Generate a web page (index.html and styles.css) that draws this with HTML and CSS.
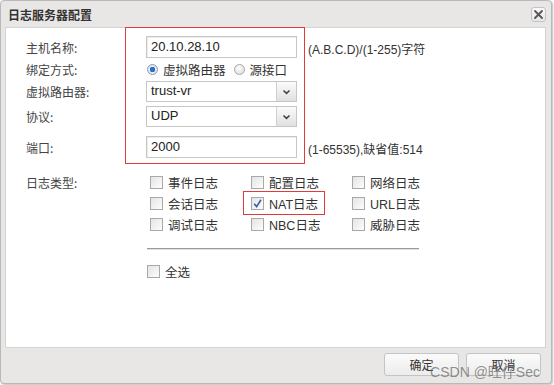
FILE: index.html
```html
<!DOCTYPE html>
<html lang="zh">
<head>
<meta charset="utf-8">
<link rel="stylesheet" href="styles.css">
</head>
<body>
<div class="dialog">
  <div class="titlebar">
    <span class="title">日志服务器配置</span>
    <span class="close">
      <svg width="11" height="11" viewBox="0 0 11 11"><path d="M2 2 L9 9 M9 2 L2 9" stroke="#555" stroke-width="1.8" stroke-linecap="round"/></svg>
    </span>
  </div>
  <div class="panel">
    <div class="row r1">
      <div class="label">主机名称:</div>
      <div class="input">20.10.28.10</div>
      <div class="hint">(A.B.C.D)/(1-255)字符</div>
    </div>
    <div class="row r2">
      <div class="label">绑定方式:</div>
      <div class="radios">
        <span class="radio on"></span><span class="rtext">虚拟路由器</span>
        <span class="radio"></span><span class="rtext">源接口</span>
      </div>
    </div>
    <div class="row r3">
      <div class="label">虚拟路由器:</div>
      <div class="select"><span class="val">trust-vr</span><span class="arrow"><svg width="9" height="6" viewBox="0 0 9 6"><path d="M1.5 1.5 L4.5 4.3 L7.5 1.5" fill="none" stroke="#444" stroke-width="1.6"/></svg></span></div>
    </div>
    <div class="row r4">
      <div class="label">协议:</div>
      <div class="select"><span class="val">UDP</span><span class="arrow"><svg width="9" height="6" viewBox="0 0 9 6"><path d="M1.5 1.5 L4.5 4.3 L7.5 1.5" fill="none" stroke="#444" stroke-width="1.6"/></svg></span></div>
    </div>
    <div class="row r5">
      <div class="label">端口:</div>
      <div class="input">2000</div>
      <div class="hint">(1-65535),缺省值:514</div>
    </div>
    <div class="types">
      <div class="label">日志类型:</div>
      <div class="checks">
        <div class="grid">
          <label class="cb"><span class="box"></span>事件日志</label>
          <label class="cb"><span class="box"></span>配置日志</label>
          <label class="cb"><span class="box"></span>网络日志</label>
          <label class="cb"><span class="box"></span>会话日志</label>
          <label class="cb"><span class="box checked"><svg width="11" height="11" viewBox="0 0 11 11"><path d="M2.2 5.8 L4.6 8.6 L9 1.8" fill="none" stroke="#3a5fb0" stroke-width="1.6"/></svg></span>NAT日志</label>
          <label class="cb"><span class="box"></span>URL日志</label>
          <label class="cb"><span class="box"></span>调试日志</label>
          <label class="cb"><span class="box"></span>NBC日志</label>
          <label class="cb"><span class="box"></span>威胁日志</label>
        </div>
        <div class="sep"></div>
        <label class="cb all"><span class="box"></span>全选</label>
      </div>
    </div>
    <div class="mark mark-main"></div>
    <div class="mark mark-nat"></div>
  </div>
  <div class="footer">
    <button class="btn">确定</button>
    <button class="btn">取消</button>
    <span class="watermark">CSDN @旺仔Sec</span>
  </div>
</div>
</body>
</html>
```
FILE: styles.css
```css
* { box-sizing: border-box; }
html, body {
  margin: 0;
  padding: 0;
  background: #ffffff;
  width: 554px;
  height: 385px;
  overflow: hidden;
}
body {
  font-family: "Liberation Sans", "Noto Sans CJK SC", sans-serif;
  font-size: 12px;
  color: #333;
}
.dialog {
  width: 552px;
  height: 384px;
  background: #e9e7e6;
  border: 1px solid #b9b9b9;
  border-radius: 4px;
  box-shadow: 1px 1px 2px rgba(0,0,0,0.25);
  display: flex;
  flex-direction: column;
  position: relative;
}
.titlebar {
  height: 26px;
  display: flex;
  align-items: center;
  justify-content: space-between;
  padding: 0 5px 0 7px;
}
.title {
  font-family: "Noto Sans CJK SC", sans-serif;
  font-weight: bold;
  font-size: 12px;
  color: #333;
}
.close {
  width: 15px;
  height: 15px;
  border: 1px solid #c4c4c4;
  border-radius: 3px;
  background: linear-gradient(#fafafa, #e6e6e6);
  display: flex;
  align-items: center;
  justify-content: center;
  margin-top: 1px;
}
.panel {
  margin: 0 5px 0 4px;
  height: 321px;
  background: #fff;
  border: 1px solid #d4d4d4;
  position: relative;
  padding: 8px 0 0 20px;
}
.row {
  display: flex;
  align-items: center;
}
.label {
  width: 120px;
  flex: none;
  font-family: "Noto Sans CJK SC", sans-serif;
  font-size: 12px;
  color: #444;
}
.r1 { height: 22px; }
.r2 { height: 23px; }
.r3 { height: 21px; }
.r4 { height: 21px; margin-top: 4px; }
.r5 { height: 22px; margin-top: 9px; }
.input {
  width: 151px;
  height: 22px;
  border: 1px solid #c6c6c6;
  box-shadow: inset 1px 1px 1px #ececec;
  padding: 0 4px;
  line-height: 19px;
  font-size: 13px;
  color: #222;
}
.hint {
  margin-left: 11px;
  font-size: 12px;
  color: #333;
  padding-top: 2px;
}
.radios {
  display: flex;
  align-items: center;
  font-family: "Noto Sans CJK SC", sans-serif;
  font-size: 12.5px;
  color: #333;
}
.radio {
  width: 11px;
  height: 11px;
  border-radius: 50%;
  border: 1px solid #a8a8a8;
  background: radial-gradient(circle at 40% 35%, #ffffff, #d6d6d6);
  margin-right: 5px;
  margin-left: 1px;
}
.radio.on {
  background: radial-gradient(circle, #2f6fc4 0 2.6px, #e8eef7 3px, #cfd6df 100%);
  border-color: #8a9cb5;
}
.rtext { margin-right: 7px; }
.select {
  width: 151px;
  height: 21px;
  border: 1px solid #c6c6c6;
  display: flex;
  align-items: stretch;
}
.select .val {
  flex: 1;
  padding: 0 4px;
  font-size: 13px;
  line-height: 18px;
  color: #222;
}
.select .arrow {
  width: 20px;
  border-left: 1px solid #d0d0d0;
  background: linear-gradient(#fbfbfb, #e0e0e0);
  display: flex;
  align-items: center;
  justify-content: center;
}
.types {
  display: flex;
  margin-top: 14px;
}
.types .label { padding-top: 2px; }
.checks {
  display: flex;
  flex-direction: column;
  width: 272px;
  margin-left: 1px;
}
.grid {
  display: grid;
  grid-template-columns: 101px 101px 70px;
  grid-auto-rows: 21px;
  padding-left: 3px;
}
.cb {
  display: flex;
  align-items: center;
  font-family: "Liberation Sans", "Noto Sans CJK SC", sans-serif;
  font-size: 12.5px;
  color: #333;
  white-space: nowrap;
}
.box {
  width: 13px;
  height: 13px;
  border: 1px solid #a9a9a9;
  background: linear-gradient(135deg, #e4e4e4, #fdfdfd);
  margin-right: 5px;
  display: flex;
  align-items: center;
  justify-content: center;
  flex: none;
}
.sep {
  margin-top: 13px;
  height: 2px;
  background: #9a9a9a;
  border-bottom: 1px solid #e0e0e0;
}
.all {
  margin-top: 11px;
  height: 21px;
}
.mark {
  position: absolute;
  border: 1.5px solid #e23a3a;
}
.mark-main {
  left: 119px;
  top: -1px;
  width: 180px;
  height: 137px;
}
.mark-nat {
  left: 237px;
  top: 163px;
  width: 82px;
  height: 24px;
}
.footer {
  flex: 1;
  display: flex;
  justify-content: flex-end;
  align-items: flex-start;
  padding: 5px 10px 0 0;
  gap: 7px;
  position: relative;
}
.btn {
  width: 75px;
  height: 23px;
  border: 1px solid #c4c4c4;
  border-radius: 3px;
  background: linear-gradient(#fbfbfb, #ececec);
  font-family: "Noto Sans CJK SC", sans-serif;
  font-size: 12px;
  color: #333;
  padding: 0;
}
.watermark {
  position: absolute;
  right: 11px;
  top: 13px;
  font-family: "Liberation Sans", "Noto Sans CJK SC", sans-serif;
  font-size: 14px;
  color: rgba(110,110,110,0.75);
}
```
